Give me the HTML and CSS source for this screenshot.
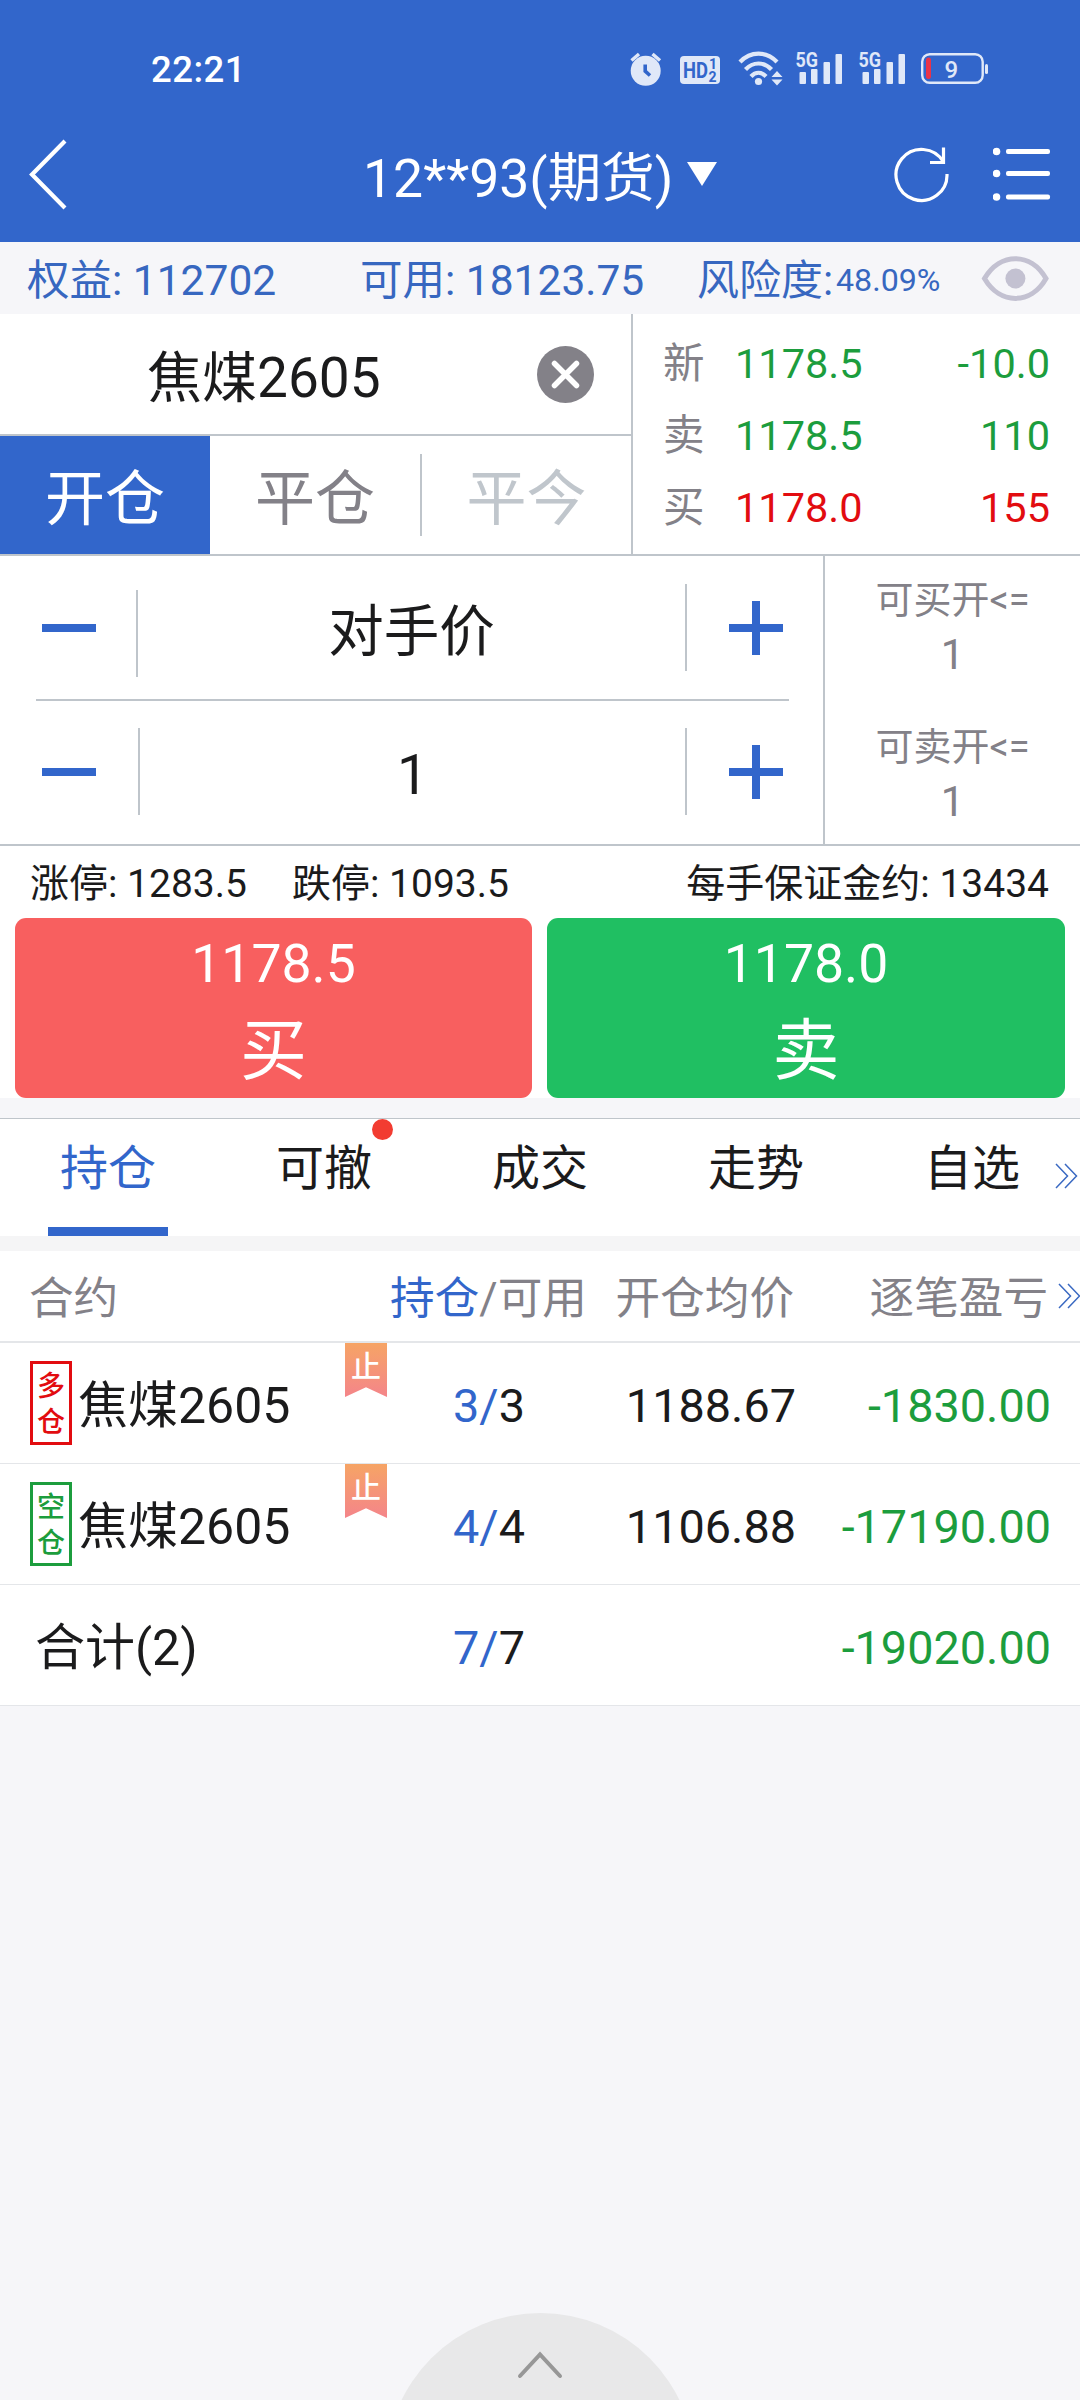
FILE: index.html
```html
<!DOCTYPE html>
<html lang="zh-CN">
<head>
<meta charset="utf-8">
<title>期货交易</title>
<link rel="stylesheet" href="styles.css">
</head>
<body>
<header class="top">
  <div class="status">
    <span class="clock">22:21</span>
    <svg class="status-icons" width="370" height="44" viewBox="625 46 370 44">
      <g fill="#e0e8f8">
        <circle cx="645.7" cy="70.8" r="15"/>
        <path d="M631.5 60.500 639 54M652.500 54 660 60.500" stroke="#e0e8f8" stroke-width="3.400" fill="none"/>
        <path d="M645.2 64.5V71.2L650 75.5" stroke="#3266cb" stroke-width="3.6" fill="none"/>
        <rect x="680" y="56" width="40" height="28" rx="4"/>
        <path d="M740 62C750.500 50.800 766.500 50.800 777 62M745.500 69.500C753 61.500 764 61.500 771.500 69.500M751 76.500C755.500 71.500 761.500 71.500 766 76.500" fill="none" stroke="#e0e8f8" stroke-width="4.2"/>
        <circle cx="758.500" cy="81.500" r="3.600"/>
        <path d="M777 71l5.500 6h-11zM777 85.500l5.500-6h-11z"/>
        <g id="bars">
          <rect x="799.500" y="72" width="6.500" height="12" rx="1"/><rect x="811" y="69" width="6.500" height="15" rx="1"/>
          <rect x="823.500" y="62" width="6.500" height="22" rx="1"/><rect x="835.500" y="54" width="6.500" height="30" rx="1"/>
          <text class="net" x="795.500" y="67" textLength="22.500" lengthAdjust="spacingAndGlyphs">5G</text>
        </g>
        <use href="#bars" x="63"/>
        <rect x="985" y="64" width="3" height="10" rx="1.500"/>
        <text class="level" x="944.500" y="78">9</text>
      </g>
      <text class="hd" x="683" y="78" textLength="25" lengthAdjust="spacingAndGlyphs">HD</text>
      <text class="hd-num" x="709" y="69">1</text>
      <text class="hd-num" x="708.500" y="81.500">2</text>
      <rect x="922.200" y="54.200" width="60.500" height="28.600" rx="7.500" fill="none" stroke="#e0e8f8" stroke-width="2.400"/>
      <rect x="926" y="57.500" width="5" height="21.500" rx="2.500" fill="#ea3349"/>
    </svg>
  </div>
  <nav class="navbar">
    <svg class="back" width="40" height="74" viewBox="28 138 40 74"><path d="M65 141 32 174.500 65 208" fill="none" stroke="#fff" stroke-width="4.200"/></svg>
    <div class="title">12**93(期货)<i class="caret"></i></div>
    <svg class="refresh" width="56" height="58" viewBox="894 146 56 58" fill="none" stroke="#fff" stroke-width="3.200"><path d="M943.500 162A25.500 25.500 0 1 0 947 174"/><path d="M943.500 147.500V162.500H930"/></svg>
    <svg class="menu" width="58" height="54" viewBox="993 147 58 54"><g fill="#fff"><circle cx="996.500" cy="151.500" r="3.800"/><circle cx="996.500" cy="173.500" r="3.800"/><circle cx="996.500" cy="197" r="3.800"/><rect x="1006" y="149" width="44" height="5" rx="2"/><rect x="1006" y="171" width="44" height="5" rx="2"/><rect x="1006" y="194.500" width="44" height="5" rx="2"/></g></svg>
  </nav>
</header>

<section class="account">
  <span class="equity">权益: 112702</span>
  <span class="avail">可用: 18123.75</span>
  <span class="risk">风险度:</span><span class="risk-value">48.09%</span>
  <svg class="eye" width="68" height="50" viewBox="981 254 68 50"><path d="M984.500 278.500C1000 252 1031 252 1046 278.500C1031 305 1000 305 984.500 278.500Z" fill="none" stroke="#c3c1d1" stroke-width="5"/><circle cx="1015.400" cy="278.500" r="10" fill="#c3c1d1"/></svg>
</section>

<section class="market">
  <div class="pick">
    <div class="contract">
      <span class="contract-name">焦煤2605</span>
      <svg width="57" height="57" viewBox="0 0 57 57"><circle cx="28.500" cy="28.500" r="28.500" fill="#838188"/><path d="M17.500 17.500 39.500 39.500M39.500 17.500 17.500 39.500" stroke="#fff" stroke-width="5.500" stroke-linecap="round"/></svg>
    </div>
    <div class="modes">
      <span class="mode mode-on">开仓</span><span class="mode">平仓</span><i class="mode-sep"></i><span class="mode mode-off">平今</span>
    </div>
  </div>
  <div class="quotes">
    <div class="quote green"><b>新</b><span>1178.5</span><em>-10.0</em></div>
    <div class="quote green"><b>卖</b><span>1178.5</span><em>110</em></div>
    <div class="quote red"><b>买</b><span>1178.0</span><em>155</em></div>
  </div>
</section>

<section class="entry">
  <div class="steppers">
    <div class="stepper price">
      <i class="minus"></i><i class="sep"></i><span class="value cjk">对手价</span><i class="sep sep-r"></i><i class="plus"></i>
    </div>
    <div class="stepper lots">
      <i class="minus"></i><i class="sep"></i><span class="value">1</span><i class="sep sep-r"></i><i class="plus"></i>
    </div>
  </div>
  <div class="limits">
    <div class="limit"><span>可买开&lt;=</span><b>1</b></div>
    <div class="limit limit-sell"><span>可卖开&lt;=</span><b>1</b></div>
  </div>
</section>

<section class="info"><span>涨停: 1283.5</span><span class="down">跌停: 1093.5</span><span class="margin">每手保证金约: 13434</span></section>

<section class="actions">
  <div class="action buy"><span>1178.5</span><b>买</b></div>
  <div class="action sell"><span>1178.0</span><b>卖</b></div>
</section>

<nav class="tabs">
  <span class="tab tab-on">持仓</span>
  <span class="tab">可撤<i class="dot"></i></span>
  <span class="tab">成交</span>
  <span class="tab">走势</span>
  <span class="tab">自选</span>
  <svg class="more more-tabs" width="24" height="26" viewBox="0 0 24 26"><path d="M1 1 12.500 13 1 25M10 1 21.500 13 10 25"/></svg>
</nav>

<section class="table">
  <div class="row head">
    <span class="c-name">合约</span><span class="c-pos"><i>持仓</i>/可用</span><span class="c-avg">开仓均价</span><span class="c-pl">逐笔盈亏</span>
    <svg class="more more-cols" width="24" height="26" viewBox="0 0 24 26"><path d="M1 1 12.500 13 1 25M10 1 21.500 13 10 25"/></svg>
  </div>
  <div class="row">
    <span class="c-name"><span class="side red"><i>多</i><i>仓</i></span>焦煤2605</span>
    <span class="ribbon">止</span>
    <span class="c-pos"><i>3/</i>3</span><span class="c-avg">1188.67</span><span class="c-pl">-1830.00</span>
  </div>
  <div class="row">
    <span class="c-name"><span class="side green"><i>空</i><i>仓</i></span>焦煤2605</span>
    <span class="ribbon">止</span>
    <span class="c-pos"><i>4/</i>4</span><span class="c-avg">1106.88</span><span class="c-pl">-17190.00</span>
  </div>
  <div class="row total">
    <span class="c-name">合计(2)</span><span class="c-pos"><i>7/</i>7</span><span class="c-avg"></span><span class="c-pl">-19020.00</span>
  </div>
</section>

<footer class="drawer">
  <div class="handle"><svg width="48" height="30" viewBox="0 0 48 30"><path d="M4 26 24 4.500 44 26" fill="none" stroke="#979797" stroke-width="4" stroke-linecap="round"/></svg></div>
</footer>
</body>
</html>
```
FILE: styles.css
```css
* { box-sizing: border-box; }
html, body { margin: 0; padding: 0; }
body {
  width: 1080px; height: 2400px; overflow: hidden;
  display: flex; flex-direction: column;
  background: #f6f6f9; color: #1b1b1c;
  font-family: Roboto, "Noto Sans CJK SC", sans-serif;
  white-space: nowrap;
}
i, em { font-style: normal; }
b { font-weight: 400; }
i { display: inline-block; }
span { display: block; }
section, header, .tabs, footer { flex: none; }

.top { height: 242px; background: #3266cb; color: #fff; }
.status { height: 107px; padding: 46px 85px 0 151px; display: flex; justify-content: space-between; }
.clock { font-size: 36.5px; font-weight: 500; letter-spacing: .5px; line-height: 47px; }
.net { font: 700 19.5px Roboto, sans-serif; }
.level { font: 500 24px Roboto, sans-serif; }
.hd { font: 700 22px Roboto, sans-serif; fill: #3266cb; }
.hd-num { font: 700 14px Roboto, sans-serif; fill: #3266cb; }
.navbar { height: 135px; display: flex; padding-left: 28px; }
.back { margin-top: 31px; }
.title { margin-left: 295px; width: 531px; display: flex; font-size: 53.5px; line-height: 143px; }
.caret { border: 15.5px solid transparent; border-top: 24px solid #fff; border-bottom: 0; height: 24px; margin: 55px 0 0 14px; }
.refresh { margin-top: 39px; }
.menu { margin: 40px 0 0 43px; }

.account { height: 72px; display: flex; color: #3767c0; font-size: 42.5px; line-height: 77px; padding-left: 27px; }
.equity { width: 333px; }
.avail { width: 337px; }
.risk { width: 139px; font-size: 42px; }
.risk-value { font-size: 32.2px; width: 145px; line-height: 76px; }
.eye { margin-top: 12px; }

.market { height: 242px; display: flex; background: #fff; border-bottom: 2px solid #bfc5cb; }
.pick { width: 633px; border-right: 2px solid #bfc5cb; }
.contract { height: 122px; border-bottom: 2px solid #bfc5cb; display: flex; padding-left: 147px; }
.contract-name { width: 390px; font-size: 55px; line-height: 129px; }
.contract svg { margin-top: 32px; }
.modes { display: flex; height: 118px; font-size: 60px; line-height: 127px; color: #838188; text-align: center; }
.mode { width: 210px; }
.mode-on { background: #3266cb; color: #fff; height: 118px; }
.mode-off { color: #c0c6cc; width: 209px; }
.mode-sep { width: 2px; height: 82px; margin-top: 18px; background: #bfc5cb; }
.quotes { width: 447px; padding: 14px 30px 0 30px; font-size: 41.5px; line-height: 72px; }
.quote { display: flex; }
.quote b { width: 72px; color: #838188; }
.quote em { margin-left: auto; }
.green { color: #1c9d3d; }
.red { color: #e20c10; }

.entry { height: 290px; display: flex; background: #fff; border-bottom: 2px solid #bfc5cb; }
.steppers { width: 825px; border-right: 2px solid #bfc5cb; }
.stepper { display: flex; margin: 0 34px 0 36px; height: 145px; padding-left: 6px; }
.price { border-bottom: 2px solid #bfc5cb; }
.minus { width: 54px; height: 8px; margin-top: 68px; background: #3266cb; }
.sep { width: 2px; height: 87px; margin: 34px 0 0 40px; background: #bfc5cb; }
.sep-r { margin: 28px 0 0; }
.value { width: 547px; text-align: center; font-size: 55.500px; line-height: 147px; }
.cjk { line-height: 153px; }
.plus { width: 54px; height: 54px; margin: 45px 0 0 42px; background: linear-gradient(#3266cb, #3266cb) center / 54px 8px no-repeat, linear-gradient(#3266cb, #3266cb) center / 8px 54px no-repeat; }
.lots .minus { margin-top: 67px; }
.lots .plus { margin-top: 44px; }
.lots .sep { margin: 27px 0 0 42px; }
.lots .sep-r { margin-left: 0; }
.lots .value { width: 545px; line-height: 150px; }
.limits { width: 255px; padding-top: 19px; color: #838188; text-align: center; }
.limit { height: 147px; font-size: 38px; line-height: 51px; }
.limit b { display: block; font-size: 42px; line-height: 58px; }

.info { height: 72px; display: flex; background: #fff; font-size: 39px; line-height: 77px; padding: 0 30px 0 30px; }
.down { margin-left: 45px; }
.margin { margin-left: auto; margin-right: 1px; }

.actions { height: 180px; display: grid; grid-template-columns: 517px 518px; gap: 15px; padding: 0 15px; background: #fff; }
.action { border-radius: 11px; color: #fff; text-align: center; }
.buy { background: #f85f5f; }
.sell { background: #20bf62; }
.action span { font-size: 53.500px; line-height: 92px; }
.action b { display: block; font-size: 67px; line-height: 82px; }

.tabs { position: relative; height: 118px; margin-top: 20px; display: flex; border-top: 1px solid #bfc5cb; background: #fff; font-size: 48px; line-height: 100px; }
.tab { position: relative; width: 216px; text-align: center; }
.tab-on { color: #3266cb; }
.tab-on::after { content: ""; position: absolute; left: 48px; bottom: 0; width: 120px; height: 9px; background: #3266cb; }
.dot { position: absolute; left: 372px; top: 0; width: 21px; height: 21px; border-radius: 50%; background: #f23c31; }
.tab .dot { left: 156px; }
.more { position: absolute; fill: none; stroke: #3a69c2; stroke-width: 1.500; }
.more-tabs { right: 1px; top: 44px; }
.more-cols { right: -2px; top: 32px; }

.table { border-top: 15px solid #f5f5f6; background: #fff; }
.row { position: relative; display: flex; height: 121px; border-bottom: 1px solid #e4e6e9; font-size: 46.800px; line-height: 126px; }
.c-name { width: 380px; padding-left: 30px; display: flex; font-size: 50px; }
.c-pos { width: 218px; text-align: center; }
.c-pos i { color: #3266cb; }
.c-avg { width: 198px; text-align: right; }
.c-pl { width: 255px; text-align: right; color: #1c9d3d; }
.head { height: 92px; border-bottom-width: 2px; font-size: 44.600px; line-height: 96px; color: #838188; }
.head .c-name { padding-left: 29px; font-size: 44.600px; }
.head .c-pos { width: 217px; }
.head .c-avg { width: 197px; }
.head .c-pl { width: 254px; color: #838188; }
.side { width: 42px; height: 84px; border: 3px solid; margin: 18px 6px 0 0; padding-top: 5px; font-size: 28px; font-weight: 500; line-height: 36px; text-align: center; }
.side i { display: block; }
.ribbon { position: absolute; left: 345px; top: 0; width: 42px; height: 54px; padding-top: 1px; font-size: 30px; font-weight: 500; line-height: 46px; text-align: center; color: #fff; background: linear-gradient(#f6a465, #f4858a); clip-path: polygon(0 0, 100% 0, 100% 100%, 50% 82%, 0 100%); }
.total .c-name { padding-left: 35px; }

.drawer { height: 87px; margin-top: auto; overflow: hidden; display: flex; justify-content: center; }
.handle { flex: none; width: 309px; height: 309px; border-radius: 50%; background: #e8e8e9; padding-top: 37px; text-align: center; }
.handle svg { display: block; margin: 0 auto; }
```
